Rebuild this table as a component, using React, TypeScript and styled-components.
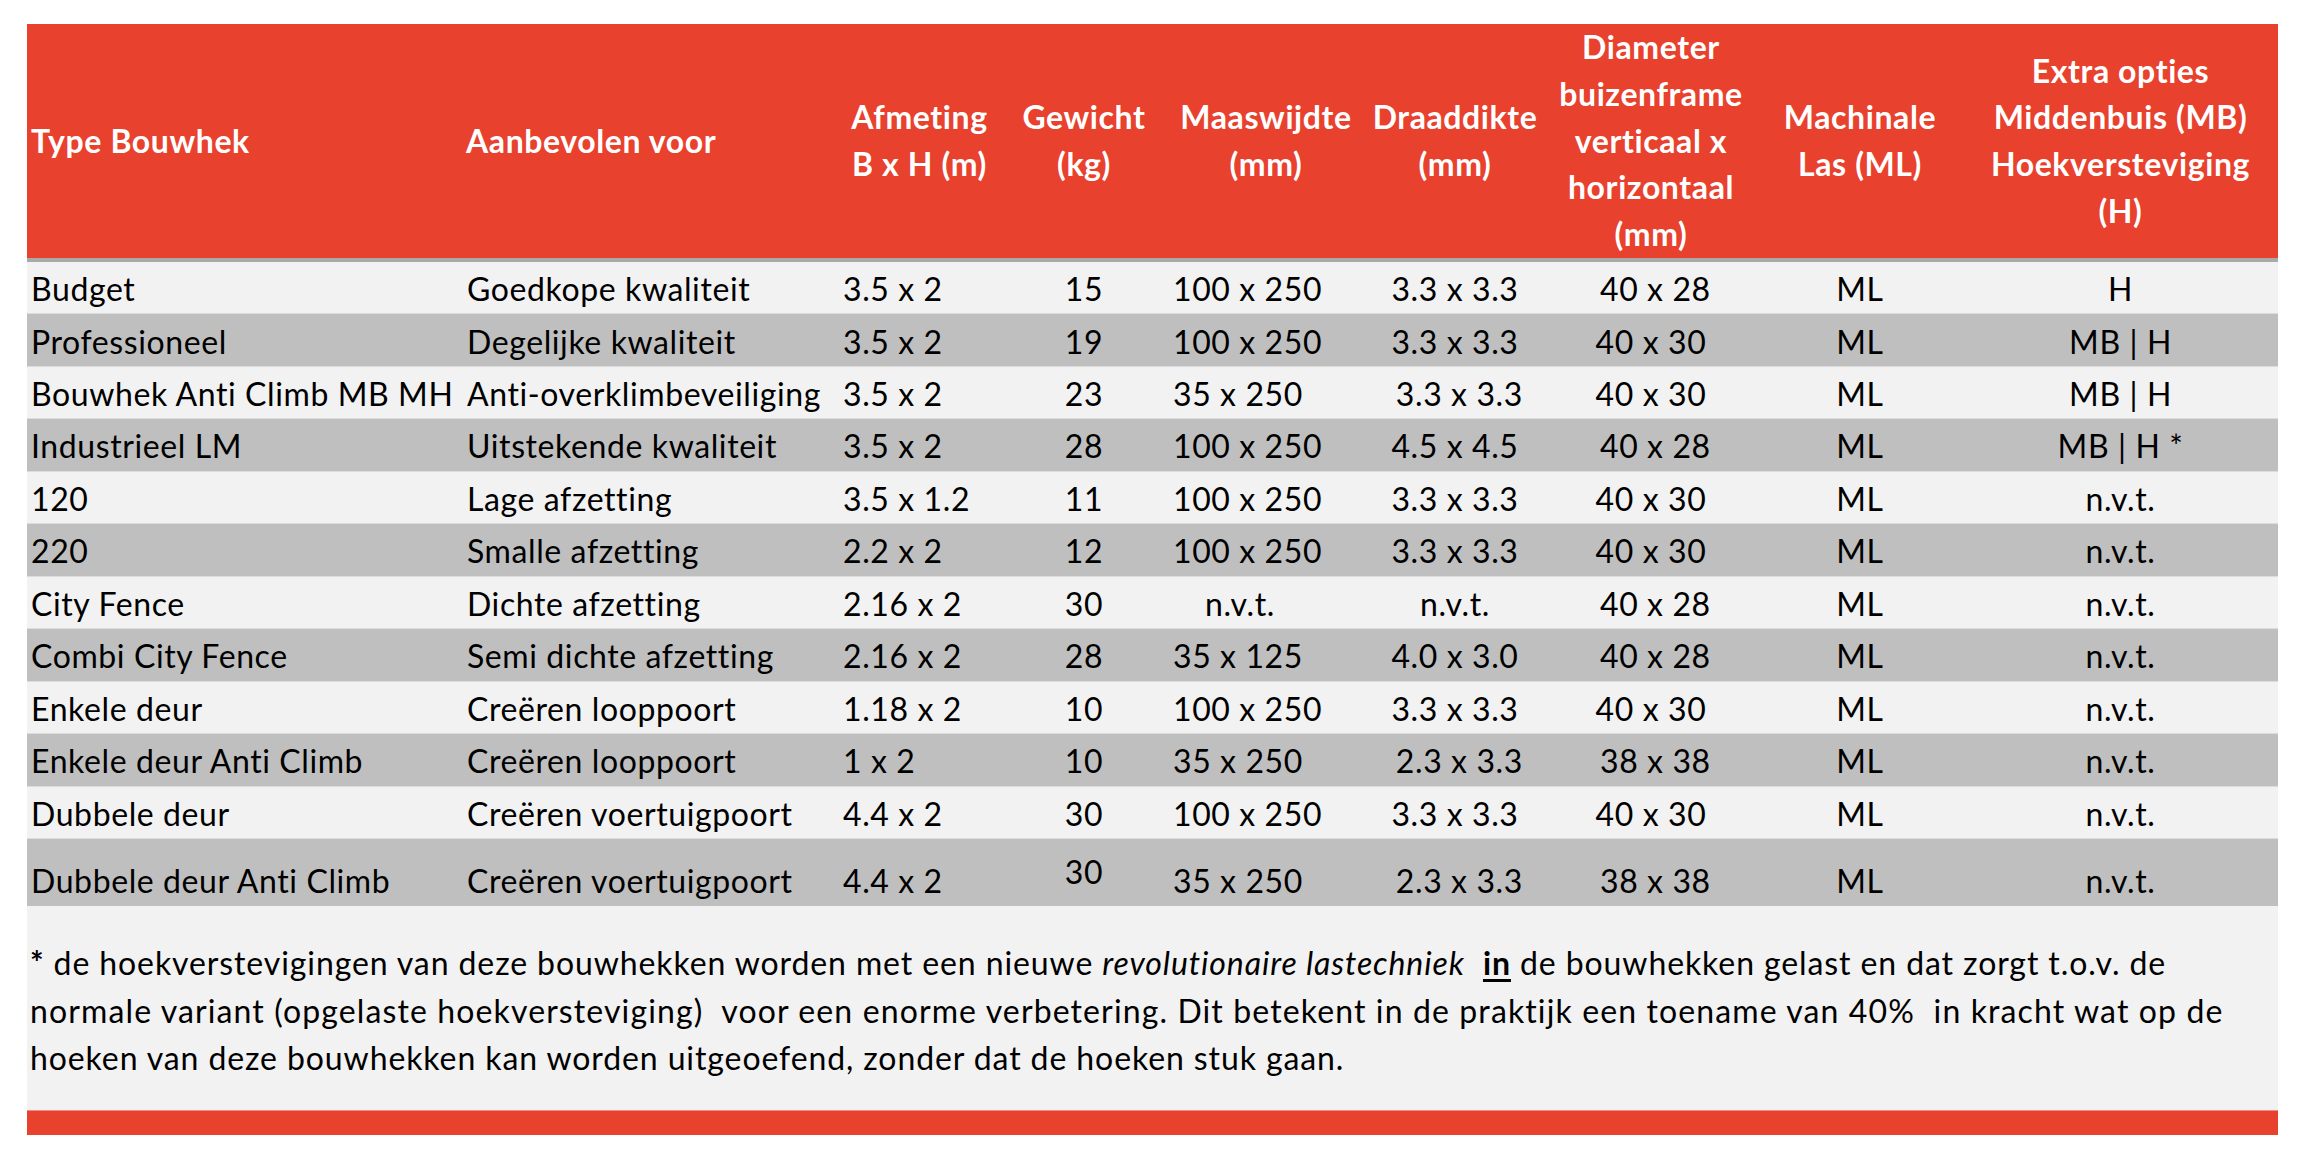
import * as React from 'react';
import styled, { createGlobalStyle } from 'styled-components';

const GlobalStyle = createGlobalStyle`
  html, body {
    margin: 0;
    padding: 0;
    background: #ffffff;
  }
  body {
    font-family: Lato, "Open Sans", sans-serif;
    color: #000000;
  }
`;

type Align = 'left' | 'center';

interface Column {
  width: number;
  align: Align;
  pad?: number;
}

const columns: Column[] = [
  { width: 435, align: 'left', pad: 4 },
  { width: 376, align: 'left', pad: 5 },
  { width: 163, align: 'left', pad: 5 },
  { width: 166, align: 'center' },
  { width: 198, align: 'left', pad: 6 },
  { width: 180, align: 'center' },
  { width: 212, align: 'center' },
  { width: 206, align: 'center' },
  { width: 315, align: 'center' },
];

const template = columns.map((c) => `${c.width}px`).join(' ');

const headers = [
  'Type Bouwhek',
  'Aanbevolen voor',
  'Afmeting\nB x H (m)',
  'Gewicht\n(kg)',
  'Maaswijdte\n(mm)',
  'Draaddikte\n(mm)',
  'Diameter\nbuizenframe\nverticaal x\nhorizontaal\n(mm)',
  'Machinale\nLas (ML)',
  'Extra opties\nMiddenbuis (MB)\nHoekversteviging\n(H)',
];

// a cell is plain text, or text with its own indent / lift
type CellData = string | { text: string; pad?: number; raise?: number };

const rows: CellData[][] = [
  ['Budget', 'Goedkope kwaliteit', '3.5 x 2', '15', '100 x 250', '3.3 x 3.3', ' 40 x 28', 'ML', 'H'],
  ['Professioneel', 'Degelijke kwaliteit', '3.5 x 2', '19', '100 x 250', '3.3 x 3.3', '40 x 30', 'ML', 'MB | H'],
  ['Bouwhek Anti Climb MB MH', 'Anti-overklimbeveiliging', '3.5 x 2', '23', '35 x 250', ' 3.3 x 3.3', '40 x 30', 'ML', 'MB | H'],
  ['Industrieel LM', 'Uitstekende kwaliteit', '3.5 x 2', '28', '100 x 250', '4.5 x 4.5', ' 40 x 28', 'ML', 'MB | H *'],
  ['120', 'Lage afzetting', '3.5 x 1.2', '11', '100 x 250', '3.3 x 3.3', '40 x 30', 'ML', 'n.v.t.'],
  ['220', 'Smalle afzetting', '2.2 x 2', '12', '100 x 250', '3.3 x 3.3', '40 x 30', 'ML', 'n.v.t.'],
  ['City Fence', 'Dichte afzetting', '2.16 x 2', '30', { text: 'n.v.t.', pad: 38 }, 'n.v.t.', ' 40 x 28', 'ML', 'n.v.t.'],
  ['Combi City Fence', 'Semi dichte afzetting', '2.16 x 2', '28', '35 x 125', '4.0 x 3.0', ' 40 x 28', 'ML', 'n.v.t.'],
  ['Enkele deur', 'Creëren looppoort', '1.18 x 2', '10', '100 x 250', '3.3 x 3.3', '40 x 30', 'ML', 'n.v.t.'],
  ['Enkele deur Anti Climb', 'Creëren looppoort', '1 x 2', '10', '35 x 250', ' 2.3 x 3.3', ' 38 x 38', 'ML', 'n.v.t.'],
  ['Dubbele deur', 'Creëren voertuigpoort', '4.4 x 2', '30', '100 x 250', '3.3 x 3.3', '40 x 30', 'ML', 'n.v.t.'],
  ['Dubbele deur Anti Climb', 'Creëren voertuigpoort', '4.4 x 2', { text: '30', raise: 9 }, '35 x 250', ' 2.3 x 3.3', ' 38 x 38', 'ML', 'n.v.t.'],
];

const Page = styled.div`
  padding: 24px 0 25px 27px;
`;

const Sheet = styled.div`
  width: 2251px;
  font-size: 32px;
  letter-spacing: 0.6px;
`;

const HeaderRow = styled.div`
  display: grid;
  grid-template-columns: ${template};
  height: 238px;
  box-sizing: border-box;
  background: #e8412e;
  border-bottom: 4px solid #a9a9a9;
`;

const HeadCell = styled.div<{ $align: Align }>`
  display: flex;
  align-items: center;
  justify-content: ${(p) => (p.$align === 'left' ? 'flex-start' : 'center')};
  padding-left: ${(p) => (p.$align === 'left' ? '4px' : '0')};
  color: #ffffff;
  font-weight: 700;
  line-height: 46.7px;
  text-align: ${(p) => p.$align};
  white-space: pre-line;
`;

const Row = styled.div<{ $shade: boolean; $tall: boolean }>`
  display: grid;
  grid-template-columns: ${template};
  height: ${(p) => (p.$tall ? '66.7px' : '52.48px')};
  box-sizing: border-box;
  background: ${(p) => (p.$shade ? '#bfbfbf' : '#f2f2f2')};
  border-bottom: ${(p) => (p.$tall ? 'none' : '1px solid #dcdcdc')};
`;

const Cell = styled.div<{ $align: Align; $pad: number; $raise: number }>`
  align-self: end;
  padding-left: ${(p) => p.$pad}px;
  padding-bottom: ${(p) => 5 + p.$raise}px;
  line-height: 38.4px;
  text-align: ${(p) => p.$align};
  white-space: pre;
`;

const Note = styled.div`
  background: #f2f2f2;
  padding: 33px 0 28px 3px;
  line-height: 47.8px;
  letter-spacing: 0.9px;
  white-space: pre;
`;

const NoteLine = styled.div<{ $spread?: number }>`
  letter-spacing: ${(p) => p.$spread ?? 0.9}px;
`;

const Star = styled.b`
  font-weight: 700;
`;

const Stress = styled.b`
  font-weight: 700;
  text-decoration: underline;
  text-underline-offset: 4px;
`;

const RedBar = styled.div`
  height: 24px;
  background: #e8412e;
  border-top: 1px solid #ee8a7f;
`;

export default function App() {
  return (
    <Page>
      <GlobalStyle />
      <Sheet>
        <HeaderRow>
          {headers.map((h, i) => (
            <HeadCell key={i} $align={i < 2 ? 'left' : 'center'}>
              {h}
            </HeadCell>
          ))}
        </HeaderRow>
        {rows.map((row, r) => (
          <Row key={r} $shade={r % 2 === 1} $tall={r === rows.length - 1}>
            {row.map((cell, c) => {
              const col = columns[c];
              const data = typeof cell === 'string' ? { text: cell } : cell;
              return (
                <Cell
                  key={c}
                  $align={col.align}
                  $pad={data.pad ?? col.pad ?? 0}
                  $raise={data.raise ?? 0}
                >
                  {data.text}
                </Cell>
              );
            })}
          </Row>
        ))}
        <Note>
          <NoteLine>
            <Star>*</Star> de hoekverstevigingen van deze bouwhekken worden met een nieuwe{' '}
            <i>revolutionaire lastechniek</i>{'  '}
            <Stress>in</Stress> de bouwhekken gelast en dat zorgt t.o.v. de
          </NoteLine>
          <NoteLine $spread={1.12}>
            normale variant (opgelaste hoekversteviging)  voor een enorme verbetering. Dit betekent in de praktijk een toename van 40%  in kracht wat op de
          </NoteLine>
          <NoteLine>
            hoeken van deze bouwhekken kan worden uitgeoefend, zonder dat de hoeken stuk gaan.
          </NoteLine>
        </Note>
        <RedBar />
      </Sheet>
    </Page>
  );
}
